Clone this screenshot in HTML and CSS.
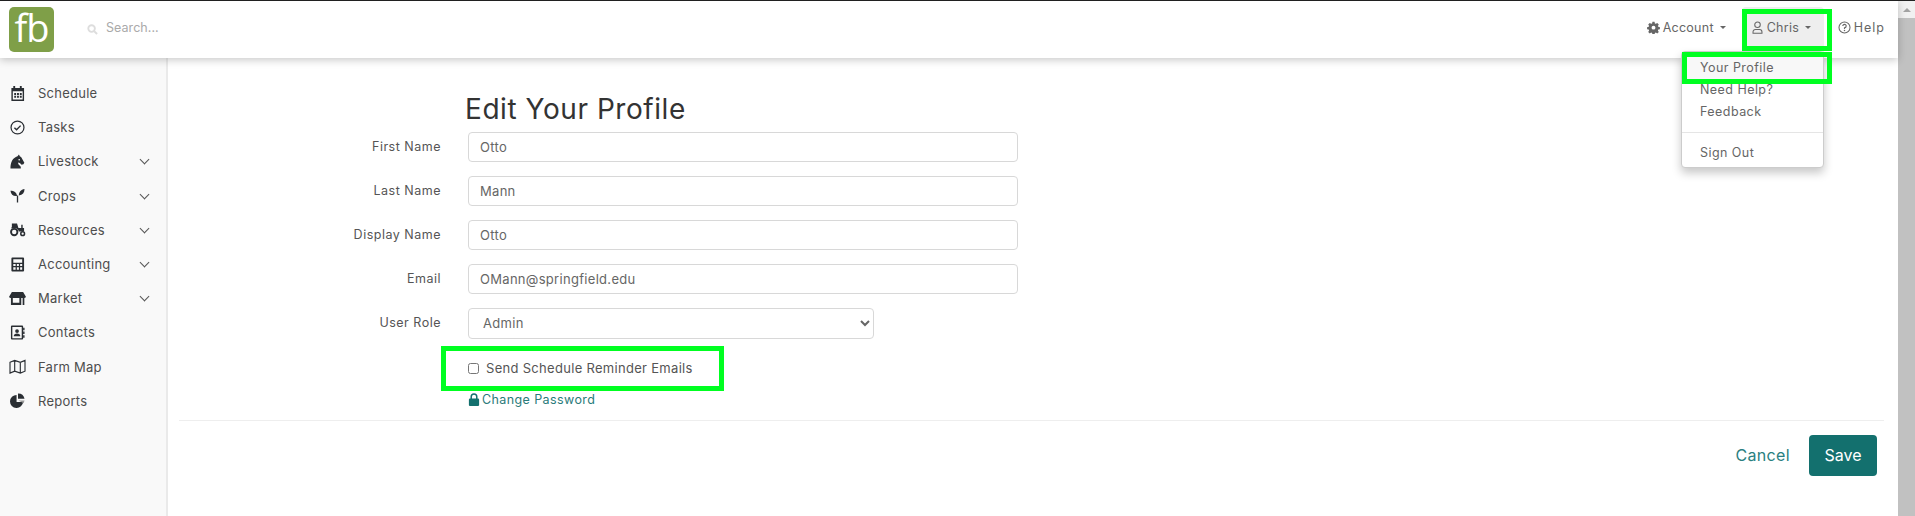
FILE: index.html
```html
<!DOCTYPE html>
<html lang="en">
<head>
<meta charset="utf-8">
<title>Edit Your Profile</title>
<link rel="stylesheet" href="styles.css">
</head>
<body>
<div class="window">
  <div class="app">
    <header class="topbar">
      <div class="logo">fb</div>
      <div class="search">
        <svg class="search-icon" viewBox="0 0 12 12"><circle cx="5" cy="5" r="3.600" fill="none" stroke="currentColor" stroke-width="2"/><path d="M7.800 7.800 11 11" stroke="currentColor" stroke-width="2.200"/></svg>
        <span>Search...</span>
      </div>
      <nav class="topnav">
        <a class="topnav-item">
          <svg class="ti" viewBox="0 0 16 16"><path fill="currentColor" d="M6.700 1h2.600l.4 2 1.200.5 1.700-1.100 1.900 1.900-1.100 1.700.5 1.200 2 .4v2.600l-2 .4-.5 1.200 1.100 1.700-1.900 1.900-1.700-1.100-1.200.5-.4 2H6.700l-.4-2-1.200-.5-1.700 1.100-1.900-1.900 1.100-1.700-.5-1.200-2-.4V7.600l2-.4.5-1.200-1.100-1.700 1.900-1.900 1.700 1.100 1.200-.5zM8 5.800a2.400 2.400 0 1 0 0 4.800 2.400 2.400 0 0 0 0-4.800z" fill-rule="evenodd"/></svg>
          Account <i class="caret"></i>
        </a>
        <a class="topnav-item active">
          <svg class="ti" viewBox="0 0 16 16"><g fill="none" stroke="currentColor" stroke-width="1.300"><circle cx="8" cy="4.600" r="3.400"/><path d="M2.500 15v-1.600A3 3 0 0 1 5.500 10.400h5a3 3 0 0 1 3 3V15z"/></g></svg>
          Chris <i class="caret"></i>
        </a>
        <a class="topnav-item help">
          <svg class="ti" viewBox="0 0 16 16"><circle cx="8" cy="8" r="6.800" fill="none" stroke="currentColor" stroke-width="1.300"/><path d="M5.900 6.300A2.100 2.100 0 1 1 8 8.400v1.300" fill="none" stroke="currentColor" stroke-width="1.400"/><circle cx="8" cy="11.700" r=".9" fill="currentColor"/></svg>
          Help
        </a>
      </nav>
      <div class="menu">
        <a class="menu-item hover">Your Profile</a>
        <a class="menu-item">Need Help?</a>
        <a class="menu-item">Feedback</a>
        <div class="menu-sep"></div>
        <a class="menu-item">Sign Out</a>
      </div>
      <div class="mark mark-chris"></div>
      <div class="mark mark-profile"></div>
    </header>
    <div class="body">
      <aside class="sidebar">
        <a class="nav-item">
          <svg class="ni" viewBox="0 0 16 16"><path fill="currentColor" fill-rule="evenodd" d="M3.500 0h2v2h5V0h2v2H15v14H1.500V2h2zM3 5.500V14.500h10.500V5.500z"/><path fill="currentColor" d="M4.500 7.500h2v2h-2zm3 0h2v2h-2zm3 0h2v2h-2zm-6 3h2v2h-2zm3 0h2v2h-2zm3 0h2v2h-2z"/></svg>
          <span>Schedule</span>
        </a>
        <a class="nav-item">
          <svg class="ni" viewBox="0 0 16 16"><circle cx="8" cy="8" r="6.900" fill="none" stroke="currentColor" stroke-width="1.300"/><path d="m4.700 8.200 2.300 2.300 4.300-4.500" fill="none" stroke="currentColor" stroke-width="1.500"/></svg>
          <span>Tasks</span>
        </a>
        <a class="nav-item">
          <svg class="ni" viewBox="0 0 16 16"><path fill="currentColor" fill-rule="evenodd" d="M.5 15.500C.3 9 3 4 8 2.500L9.500.5l1 2 1.500 1 3.300 5.800-1 1.700-2 .4-1.800-1.800L8.500 9 9 11l2.500 2.500v2zM9.800 5.200a.8.8 0 1 0 .01 0z"/></svg>
          <span>Livestock</span><i class="chev"></i>
        </a>
        <a class="nav-item">
          <svg class="ni" viewBox="0 0 16 16"><path fill="currentColor" d="M.5 3c4 0 6.500 1.500 7 5.500C3.500 9 1 7 .5 3zM15.500 1c0 4-2 6.500-6 7-.2-3.500 2-6.500 6-7zM7.300 8h1.400v7.500H7.300z"/></svg>
          <span>Crops</span><i class="chev"></i>
        </a>
        <a class="nav-item">
          <svg class="ni ni-wide" viewBox="0 0 18 16"><path fill="currentColor" d="M3 1.500h5.500l1.500 5h3V3h1.500v3.500H16v3.500h-5.500A4.700 4.700 0 0 0 4 7H2.500V5.500H3z"/><circle cx="5.500" cy="10.700" r="3.400" fill="none" stroke="currentColor" stroke-width="2"/><circle cx="14.500" cy="12.500" r="2" fill="none" stroke="currentColor" stroke-width="1.600"/></svg>
          <span>Resources</span><i class="chev"></i>
        </a>
        <a class="nav-item">
          <svg class="ni" viewBox="0 0 16 16"><path fill="currentColor" fill-rule="evenodd" d="M2.500.5h11.500a1 1 0 0 1 1 1v13a1 1 0 0 1-1 1H2.500a1 1 0 0 1-1-1v-13a1 1 0 0 1 1-1zM3.500 2.500V6h9.500V2.500zM3.500 7.500v2h2.500v-2zm3.800 0v2h2.200v-2zm3.500 0v2h2.200v-2zM3.500 11v2.500h2.500V11zm3.800 0v2.500h2.200V11zm3.500 0v2.500h2.200V11z"/></svg>
          <span>Accounting</span><i class="chev"></i>
        </a>
        <a class="nav-item">
          <svg class="ni ni-wide" viewBox="0 0 18 16"><path fill="currentColor" d="M3 1h12l3 5a2 2 0 0 1-2 1.500H2A2 2 0 0 1 0 6z"/><path fill="currentColor" d="M2 7.500h2V12.500h7V7.500h2V15H2zM14.500 7.500h1.800V15h-1.800z"/></svg>
          <span>Market</span><i class="chev"></i>
        </a>
        <a class="nav-item">
          <svg class="ni" viewBox="0 0 16 16"><path fill="currentColor" fill-rule="evenodd" d="M2 .5h11a1 1 0 0 1 1 1v13a1 1 0 0 1-1 1H2a1 1 0 0 1-1-1v-13a1 1 0 0 1 1-1zM2.500 2v12h10V2z"/><circle cx="7.500" cy="6.500" r="2" fill="currentColor"/><path fill="currentColor" d="M4 12c0-2 1.500-3 3.500-3S11 10 11 12zM14 3h1.500v2.500H14zM14 7h1.500v2.500H14zM14 11h1.500v2.500H14z"/></svg>
          <span>Contacts</span>
        </a>
        <a class="nav-item">
          <svg class="ni ni-wide" viewBox="0 0 18 16"><path fill="none" stroke="currentColor" stroke-width="1.200" d="M1 3.500 6 1.500l6 2 5-2V13l-5 2-6-2-5 2zM6 1.500V13M12 3.500V15"/></svg>
          <span>Farm Map</span>
        </a>
        <a class="nav-item">
          <svg class="ni" viewBox="0 0 16 16"><path fill="currentColor" d="M7 2a7 7 0 1 0 7 7.500H7z"/><path fill="currentColor" d="M8.500.5A7 7 0 0 1 15.500 6H8.500z"/><path fill="#9a9a9a" d="M9 8h6.500l-1 3z"/></svg>
          <span>Reports</span>
        </a>
      </aside>
      <main class="main">
        <form class="profile">
          <h1 class="title">Edit Your Profile</h1>
          <div class="row"><label class="lbl">First Name</label><input class="field" type="text" value="Otto"></div>
          <div class="row"><label class="lbl">Last Name</label><input class="field" type="text" value="Mann"></div>
          <div class="row"><label class="lbl">Display Name</label><input class="field" type="text" value="Otto"></div>
          <div class="row"><label class="lbl">Email</label><input class="field" type="text" value="OMann@springfield.edu"></div>
          <div class="row"><label class="lbl">User Role</label><select class="field field-select"><option>Admin</option></select></div>
          <div class="check-row">
            <input class="check" type="checkbox" id="remind">
            <label class="check-label" for="remind">Send Schedule Reminder Emails</label>
            <div class="mark mark-check"></div>
          </div>
          <a class="pw-link">
            <svg class="lock" viewBox="0 0 12 14"><path fill="none" stroke="currentColor" stroke-width="1.600" d="M3 6.500V4a3 3 0 0 1 6 0v2.500"/><rect x=".5" y="6" width="11" height="8" rx="1.200" fill="currentColor"/></svg>Change Password
          </a>
        </form>
        <div class="actions">
          <a class="cancel">Cancel</a>
          <button class="save" type="button">Save</button>
        </div>
      </main>
    </div>
  </div>
  <div class="scrollbar">
    <div class="scroll-arrow"></div>
    <div class="scroll-thumb"></div>
  </div>
</div>
</body>
</html>
```
FILE: styles.css
```css
* { box-sizing: border-box; }
html, body { margin: 0; height: 100%; overflow: hidden; }
body { font-family: Inter, "Open Sans", "Liberation Sans", sans-serif; font-size: 13px; color: #555; background: #fff; }
a { color: inherit; text-decoration: none; }

.window { display: flex; height: 516px; border-top: 1px solid #222; }
.app { flex: 1; min-width: 0; display: flex; flex-direction: column; }

.topbar { position: relative; z-index: 2; height: 57px; flex: none; display: flex; align-items: center; background: #fff; box-shadow: 0 2px 8px rgba(0,0,0,.22); }
.logo { width: 45px; height: 45px; margin: -1px 0 0 9px; background: #7f9f48; border-radius: 5px; color: #fff; font: 400 38px/41px "Open Sans", sans-serif; letter-spacing: -1px; text-align: center; }
.search { display: flex; align-items: center; gap: 8px; margin: -4px 0 0 33px; color: #aaa; font-size: 12.500px; letter-spacing: .05px; }
.search-icon { width: 11px; height: 11px; color: #ddd; margin-top: 3px; }

.topnav { margin-left: auto; display: flex; align-items: stretch; height: 45px; margin-top: -1px; padding-right: 5px; color: #666; font-size: 12.500px; letter-spacing: .25px; }
.topnav-item { display: flex; align-items: center; gap: 2px; padding: 0 8px 4px; }
.topnav-item:nth-child(1) { padding-right: 16px; }
.topnav-item.active { width: 82px; padding-left: 9px; background: #eee; border-radius: 4px 4px 0 0; }
.topnav-item.help { padding-left: 14px; letter-spacing: 1px; }
.ti { width: 13px; height: 13px; margin-right: 1px; }
.caret { width: 0; height: 0; margin-left: 4px; border: 3.500px solid transparent; border-top-color: #666; border-bottom: 0; }

.menu { position: absolute; top: 50px; right: 74px; width: 143px; height: 117px; padding: 5px 0; background: #fff; border: 1px solid #ccc; border-radius: 4px; box-shadow: 0 5px 10px rgba(0,0,0,.22); color: #666; font-size: 12.500px; letter-spacing: .45px; }
.menu-item { display: block; height: 22px; line-height: 22px; padding-left: 18px; }
.menu-item.hover { background: #f8f8f8; }
.menu-sep { height: 1px; margin: 9px 0 9px; background: #e5e5e5; }

.mark { position: absolute; border: 5px solid #00ff21; pointer-events: none; }
.mark-chris { top: 8px; right: 66px; width: 90px; height: 42px; }
.mark-profile { top: 51px; right: 66px; width: 150px; height: 32px; }
.mark-check { top: -14px; left: -27px; width: 283px; height: 45px; }

.body { flex: 1; min-height: 0; display: flex; }
.sidebar { width: 168px; flex: none; padding-top: 18px; background: #f9f9f9; border-right: 2px solid #eaeaea; }
.nav-item { position: relative; display: flex; align-items: center; height: 34.200px; padding-left: 10px; color: #4d4d4d; font-size: 13px; letter-spacing: .25px; }
.ni { width: 15px; height: 15px; color: #2a2e33; flex: none; margin-right: 13px; }
.ni-wide { width: 17px; margin-right: 12px; margin-left: -1px; }
.chev { position: absolute; left: 141px; top: 12px; width: 7px; height: 7px; border: solid #555; border-width: 0 1.200px 1.200px 0; transform: rotate(45deg); }

.main { flex: 1; min-width: 0; padding: 0 14px 0 13px; }
.profile { padding-top: 33px; height: 362px; }
.title { margin: 0 0 5px 284px; font-size: 28px; line-height: 36px; font-weight: 400; color: #333; letter-spacing: .55px; }
.row { display: flex; align-items: center; height: 30px; margin-bottom: 14px; }
.lbl { width: 260px; margin: -1px 27px 0 0; text-align: right; color: #555; font-size: 12.500px; letter-spacing: .5px; }
.field { width: 550px; height: 30px; padding: 0 11px; border: 1px solid #d8d8d8; border-radius: 4px; background: #fff; color: #666; font: 13px Inter, sans-serif; letter-spacing: .3px; }
.field-select { width: 406px; height: 31px; padding-left: 10px; }
.check-row { position: relative; display: flex; align-items: center; margin: 22px 0 0 287px; height: 16px; }
.check { width: 11px; height: 11px; margin: 0 7px 0 0; }
.check-label { font-size: 13px; letter-spacing: .3px; color: #555; }
.pw-link { display: flex; align-items: center; gap: 2px; margin: 16px 0 0 287px; color: #2a7a7a; font-size: 12.500px; letter-spacing: .4px; }
.lock { width: 12px; height: 13px; color: #13706e; }

.actions { display: flex; align-items: center; justify-content: flex-end; gap: 19px; height: 60px; padding: 9px 7px 0 0; border-top: 1px solid #eee; margin-left: -2px; }
.cancel { color: #2a8080; font-size: 16px; letter-spacing: .35px; }
.save { width: 68px; height: 41px; border: 0; border-radius: 4px; background: #13706e; color: #fff; font: 400 16px Inter, sans-serif; }

.scrollbar { width: 17px; flex: none; display: flex; flex-direction: column; background: #f1f1f1; }
.scroll-arrow { height: 17px; flex: none; position: relative; }
.scroll-arrow::after { content: ""; position: absolute; left: 5px; top: 7px; border: 4px solid transparent; border-bottom-color: #a3a3a3; border-top: 0; }
.scroll-thumb { flex: 1; background: #c1c1c1; }
```
